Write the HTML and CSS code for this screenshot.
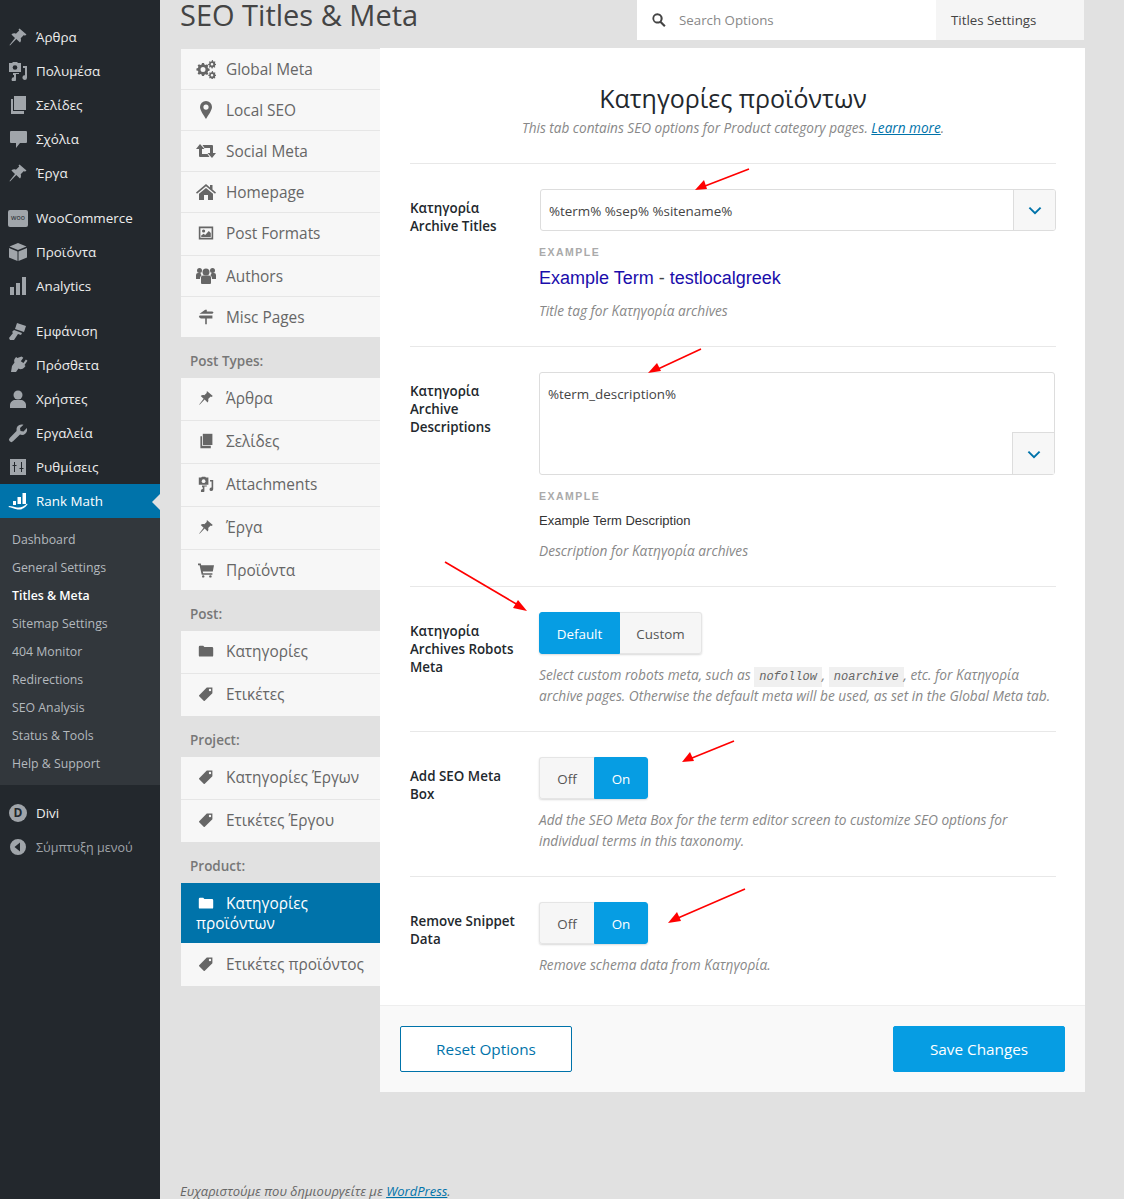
FILE: index.html
```html
<!DOCTYPE html>
<html lang="el">
<head>
    <meta charset="UTF-8">
    <meta name="viewport" content="width=device-width, initial-scale=1.0">
    <title>SEO Titles &amp; Meta</title>
    <link rel="stylesheet" href="styles.css">
</head>
<body>
    <svg class="sprite" width="0" height="0" aria-hidden="true">
        <symbol id="i-pin" viewBox="0 0 20 20"><path d="M11.500 1.500l7 6-1.600 1.200-1-.6-3.200 3.200c.6 1.600.3 3.200-.7 4.300L8.300 12 2 18.500l-.5-.5L7 11 3.400 7.400c1.200-1.100 3-1.400 4.500-.7l3.300-3.200-.7-.9z"/></symbol>
        <symbol id="i-media" viewBox="0 0 20 20"><path d="M1 2h3l1-1h4l1 1h3v9H1z"/><circle cx="7" cy="6.500" r="2.300" fill="var(--hole)"/><path d="M15 5h4v11.500a2.300 2.300 0 1 1-2-2.200V7h-2zM5 12h6v1H8v5.500a2.200 2.200 0 1 1-2-2.200V14H5z"/></symbol>
        <symbol id="i-pages" viewBox="0 0 20 20"><path d="M6 1h12v14H6z"/><path d="M3 4h2v12h11v3H3z"/></symbol>
        <symbol id="i-comment" viewBox="0 0 20 20"><path d="M3 2h15a1 1 0 0 1 1 1v10a1 1 0 0 1-1 1h-6l-4 5v-5H3a1 1 0 0 1-1-1V3a1 1 0 0 1 1-1z"/></symbol>
        <symbol id="i-box" viewBox="0 0 20 20"><path d="M10 1l8.500 3.500L10 8 1.500 4.500z"/><path d="M1 6l8.500 3.500V19L1 15.500zM19 6v9.500L10.500 19V9.500z"/></symbol>
        <symbol id="i-bars" viewBox="0 0 20 20"><path d="M2 11h4v8H2zM8 7h4v12H8zM14 1h4v18h-4z"/></symbol>
        <symbol id="i-brush" viewBox="0 0 20 20"><path d="M9 2l9 3-2 6-9-3z"/><path d="M6 9l8 3-1 2-3-1-4 6H2l-1-2 4-5-1-1z"/></symbol>
        <symbol id="i-plugin" viewBox="0 0 20 20"><path d="M13.500 1.500l1.800 1.200-2.500 3.500 2.600 1.900 2.500-3.500 1.600 1.200-3 4.300 1 .8-1 1.300c-1.500 2-4 2.400-6 1.400L8 17H3l1-6 2.500-3.500c-.6-1.500-.4-3 .6-4.300l1-1.200 1.300.9z"/></symbol>
        <symbol id="i-user" viewBox="0 0 20 20"><circle cx="10" cy="6" r="4.500"/><path d="M2 19v-3c0-3 3-5 5-5h6c2 0 5 2 5 5v3z"/></symbol>
        <symbol id="i-wrench" viewBox="0 0 20 20"><path d="M14 1.500a5 5 0 0 1 1.500.2L12 5l.5 3 3 .5 3.300-3.500A5.200 5.200 0 0 1 12 11.500L5 18.300a1.800 1.800 0 0 1-3.300-3.300L8.500 8A5.200 5.200 0 0 1 14 1.500z"/></symbol>
        <symbol id="i-sliders" viewBox="0 0 20 20"><path fill-rule="evenodd" d="M2 2h16v16H2zM6 5v3H4.500v1H6v6h1V9h1.500V8H7V5zM13 5v6h-1.500v1H13v3h1v-3h1.500v-1H14V5z"/></symbol>
        <symbol id="i-rank" viewBox="0 0 20 20"><path d="M5 10h3v4H5zM9.500 6H13v7H9.500zM14.500 2H18v11h-3.500z"/><path d="M1 15c3 0 5 1 8 1.500 4 .5 7-1 10-4l.5 1c-3 4-6 5.500-10 5-3-.5-6-2-9-2.500z"/></symbol>
        <symbol id="i-back" viewBox="0 0 20 20"><path fill-rule="evenodd" d="M10 2a8 8 0 1 1 0 16 8 8 0 0 1 0-16zM12 5.500L6.500 10l5.500 4.500z"/></symbol>
        <symbol id="i-gears" viewBox="0 0 20 20"><path fill-rule="evenodd" d="M6 4l2 .1.400 1.500 1.300.5 1.300-.8 1.400 1.400-.8 1.300.5 1.300 1.500.4v2l-1.500.4-.5 1.300.8 1.300-1.400 1.400-1.300-.8-1.300.5L8 17H6l-.4-1.500-1.300-.5-1.300.8-1.400-1.400.8-1.300-.5-1.300L.4 11.400v-2l1.500-.4.5-1.300-.8-1.300L3 5.200l1.300.8 1.300-.5zM7 8a2.500 2.500 0 1 0 0 5 2.500 2.500 0 0 0 0-5z"/><path fill-rule="evenodd" d="M16 1l1 .3.100 1 1 .5.800-.6.600.8-.600.8.3 1 1 .2v1l-1 .2-.4 1 .6.800-.8.700-.8-.6-1 .4-.2 1h-1l-.2-1-1-.4-.7.600-.8-.8.600-.8-.4-1-1-.1v-1l1-.2.4-1-.6-.7.800-.8.800.5 1-.4zM16 4a1.300 1.300 0 1 0 0 2.600A1.300 1.300 0 0 0 16 4zM16 12l1 .3.100 1 1 .4.800-.5.600.8-.6.800.4 1 1 .1v1l-1 .2-.4 1 .5.800-.8.600-.7-.5-1 .4-.2 1h-1l-.2-1-1-.4-.7.500-.7-.7.500-.8-.4-1-1-.2v-1l1-.1.4-1-.5-.8.700-.7.800.5 1-.4zM16 15a1.300 1.300 0 1 0 0 2.600A1.300 1.300 0 0 0 16 15z"/></symbol>
        <symbol id="i-marker" viewBox="0 0 20 20"><path fill-rule="evenodd" d="M10 1a6 6 0 0 1 6 6c0 3-3.500 8-6 12-2.500-4-6-9-6-12a6 6 0 0 1 6-6zM10 4.500a2.600 2.600 0 1 0 0 5.200 2.600 2.600 0 0 0 0-5.200z"/></symbol>
        <symbol id="i-retweet" viewBox="0 0 20 20"><path d="M4 3l4.500 5H6v5h5.500l2 3H4a1 1 0 0 1-1-1V8H0z"/><path d="M16 17l-4.500-5H14V7H8.500l-2-3H16a1 1 0 0 1 1 1v7h3z"/></symbol>
        <symbol id="i-home" viewBox="0 0 20 20"><path d="M10 2l4 3.400V3h2.500v4.500L20 10.500l-1 1.200L10 4.300 1 11.700l-1-1.200z"/><path d="M10 6l7 5.800V18h-5v-5H8v5H3v-6.200z"/></symbol>
        <symbol id="i-picture" viewBox="0 0 20 20"><path fill-rule="evenodd" d="M1 2h18v16H1zM3 4v12h14V4z"/><circle cx="7" cy="7.500" r="2"/><path d="M4 15v-2l3-2 2 1.500 4.500-5L16 10v5z"/></symbol>
        <symbol id="i-users" viewBox="0 0 20 20"><circle cx="10" cy="6" r="3.500"/><circle cx="3.500" cy="4.500" r="2.500"/><circle cx="16.500" cy="4.500" r="2.500"/><path d="M5 11a2 2 0 0 1 2-1.500h6a2 2 0 0 1 2 1.500v6a1 1 0 0 1-1 1H6a1 1 0 0 1-1-1z"/><path d="M0 9a2 2 0 0 1 2-2h2.500c.2 1 .5 1.600 1.200 2.200C4.500 10 4 11 4 13H0zM20 9a2 2 0 0 0-2-2h-2.500c-.2 1-.5 1.600-1.200 2.200 1.200.8 1.700 1.800 1.700 3.800h4z"/></symbol>
        <symbol id="i-sign" viewBox="0 0 20 20"><path d="M9 1h2v2h7l1.500 1.500L18 6H2zM2 8h16v4H11v7H9v-7H3.500L1 10z"/></symbol>
        <symbol id="i-cart" viewBox="0 0 20 20"><path d="M0 2h3.500L4 4h16l-1.500 8H6l.4 2H18v2H4.600L2 4H0z"/><circle cx="6.500" cy="18" r="1.500"/><circle cx="15.500" cy="18" r="1.500"/></symbol>
        <symbol id="i-folder" viewBox="0 0 20 20"><path d="M1 5a1.500 1.500 0 0 1 1.500-1.500h4L8 5h9.500A1.500 1.500 0 0 1 19 6.500v9a1.500 1.500 0 0 1-1.500 1.500h-15A1.500 1.500 0 0 1 1 15.500z"/></symbol>
        <symbol id="i-tag" viewBox="0 0 20 20"><path fill-rule="evenodd" d="M11 2h7v7l-9.500 9.500a1 1 0 0 1-1.400 0l-5.600-5.600a1 1 0 0 1 0-1.400zM15 3.500a1.500 1.500 0 1 0 0 3 1.500 1.500 0 0 0 0-3z"/></symbol>
        <symbol id="i-search" viewBox="0 0 20 20"><path fill-rule="evenodd" d="M8 1.500a6.500 6.500 0 0 1 5.300 10.300l5 5-1.900 1.900-5-5A6.500 6.500 0 1 1 8 1.500zM8 4a4 4 0 1 0 0 8 4 4 0 0 0 0-8z"/></symbol>
        <symbol id="i-chevron" viewBox="0 0 20 20"><path d="M3 7l7 7 7-7" fill="none" stroke="currentColor" stroke-width="2.400"/></symbol>
    </svg>

    <div class="wrap">
        <nav class="adminmenu">
            <ul class="menu-group">
                <li class="menu-item"><svg class="menu-icon"><use href="#i-pin"/></svg>Άρθρα</li>
                <li class="menu-item"><svg class="menu-icon"><use href="#i-media"/></svg>Πολυμέσα</li>
                <li class="menu-item"><svg class="menu-icon"><use href="#i-pages"/></svg>Σελίδες</li>
                <li class="menu-item"><svg class="menu-icon"><use href="#i-comment"/></svg>Σχόλια</li>
                <li class="menu-item"><svg class="menu-icon"><use href="#i-pin"/></svg>Έργα</li>
            </ul>
            <ul class="menu-group">
                <li class="menu-item"><span class="woo-icon">woo</span>WooCommerce</li>
                <li class="menu-item"><svg class="menu-icon"><use href="#i-box"/></svg>Προϊόντα</li>
                <li class="menu-item"><svg class="menu-icon"><use href="#i-bars"/></svg>Analytics</li>
            </ul>
            <ul class="menu-group">
                <li class="menu-item"><svg class="menu-icon"><use href="#i-brush"/></svg>Εμφάνιση</li>
                <li class="menu-item"><svg class="menu-icon"><use href="#i-plugin"/></svg>Πρόσθετα</li>
                <li class="menu-item"><svg class="menu-icon"><use href="#i-user"/></svg>Χρήστες</li>
                <li class="menu-item"><svg class="menu-icon"><use href="#i-wrench"/></svg>Εργαλεία</li>
                <li class="menu-item"><svg class="menu-icon"><use href="#i-sliders"/></svg>Ρυθμίσεις</li>
                <li class="menu-item current"><svg class="menu-icon"><use href="#i-rank"/></svg>Rank Math</li>
            </ul>
            <ul class="submenu">
                <li>Dashboard</li>
                <li>General Settings</li>
                <li class="sub-current">Titles &amp; Meta</li>
                <li>Sitemap Settings</li>
                <li>404 Monitor</li>
                <li>Redirections</li>
                <li>SEO Analysis</li>
                <li>Status &amp; Tools</li>
                <li>Help &amp; Support</li>
            </ul>
            <ul class="menu-group">
                <li class="menu-item"><span class="divi-icon">D</span>Divi</li>
                <li class="menu-item collapse"><svg class="menu-icon"><use href="#i-back"/></svg>Σύμπτυξη μενού</li>
            </ul>
        </nav>

        <div class="content">
            <header class="topbar">
                <h1 class="page-title">SEO Titles &amp; Meta</h1>
                <div class="search-box">
                    <div class="search-input"><svg class="search-icon"><use href="#i-search"/></svg>Search Options</div>
                    <div class="search-scope">Titles Settings</div>
                </div>
            </header>

            <div class="columns">
                <aside class="tabs">
                    <a class="tab"><svg class="tab-icon"><use href="#i-gears"/></svg>Global Meta</a>
                    <a class="tab"><svg class="tab-icon"><use href="#i-marker"/></svg>Local SEO</a>
                    <a class="tab"><svg class="tab-icon"><use href="#i-retweet"/></svg>Social Meta</a>
                    <a class="tab"><svg class="tab-icon"><use href="#i-home"/></svg>Homepage</a>
                    <a class="tab tall"><svg class="tab-icon small"><use href="#i-picture"/></svg>Post Formats</a>
                    <a class="tab"><svg class="tab-icon"><use href="#i-users"/></svg>Authors</a>
                    <a class="tab last"><svg class="tab-icon small"><use href="#i-sign"/></svg>Misc Pages</a>

                    <p class="tab-label">Post Types:</p>
                    <a class="tab tall"><svg class="tab-icon small"><use href="#i-pin"/></svg>Άρθρα</a>
                    <a class="tab tall"><svg class="tab-icon small"><use href="#i-pages"/></svg>Σελίδες</a>
                    <a class="tab tall"><svg class="tab-icon small"><use href="#i-media"/></svg>Attachments</a>
                    <a class="tab tall"><svg class="tab-icon small"><use href="#i-pin"/></svg>Έργα</a>
                    <a class="tab last"><svg class="tab-icon small"><use href="#i-cart"/></svg>Προϊόντα</a>

                    <p class="tab-label">Post:</p>
                    <a class="tab tall"><svg class="tab-icon small"><use href="#i-folder"/></svg>Κατηγορίες</a>
                    <a class="tab tall last"><svg class="tab-icon small"><use href="#i-tag"/></svg>Ετικέτες</a>

                    <p class="tab-label">Project:</p>
                    <a class="tab tall"><svg class="tab-icon small"><use href="#i-tag"/></svg>Κατηγορίες Έργων</a>
                    <a class="tab tall last"><svg class="tab-icon small"><use href="#i-tag"/></svg>Ετικέτες Έργου</a>

                    <p class="tab-label">Product:</p>
                    <a class="tab active"><svg class="tab-icon small"><use href="#i-folder"/></svg>Κατηγορίες προϊόντων</a>
                    <a class="tab tall end"><svg class="tab-icon small"><use href="#i-tag"/></svg>Ετικέτες προϊόντος</a>
                </aside>

                <main class="panel">
                    <div class="panel-body">
                        <div class="panel-head">
                            <h2>Κατηγορίες προϊόντων</h2>
                            <p>This tab contains SEO options for Product category pages. <a href="#">Learn more</a>.</p>
                        </div>

                        <section class="row row-titles">
                            <label class="row-label">Κατηγορία Archive Titles</label>
                            <div class="row-field">
                                <div class="text-input">
                                    <span class="input-value">%term% %sep% %sitename%</span>
                                    <span class="input-btn"><svg class="chevron"><use href="#i-chevron"/></svg></span>
                                </div>
                                <div class="example-label">EXAMPLE</div>
                                <div class="example-title"><span>Example Term</span> <b>-</b> testlocalgreek</div>
                                <p class="desc">Title tag for Κατηγορία archives</p>
                            </div>
                        </section>

                        <section class="row row-descriptions">
                            <label class="row-label">Κατηγορία Archive Descriptions</label>
                            <div class="row-field">
                                <div class="text-area">
                                    <span class="input-value">%term_description%</span>
                                    <span class="area-btn"><svg class="chevron"><use href="#i-chevron"/></svg></span>
                                </div>
                                <div class="example-label">EXAMPLE</div>
                                <div class="example-text">Example Term Description</div>
                                <p class="desc">Description for Κατηγορία archives</p>
                            </div>
                        </section>

                        <section class="row row-robots">
                            <label class="row-label">Κατηγορία Archives Robots Meta</label>
                            <div class="row-field">
                                <div class="btn-group">
                                    <span class="seg seg-on seg-default">Default</span><span class="seg seg-custom">Custom</span>
                                </div>
                                <p class="desc">Select custom robots meta, such as <code>nofollow</code>, <code>noarchive</code>, etc. for Κατηγορία archive pages. Otherwise the default meta will be used, as set in the Global Meta tab.</p>
                            </div>
                        </section>

                        <section class="row row-toggle">
                            <label class="row-label">Add SEO Meta Box</label>
                            <div class="row-field">
                                <div class="btn-group">
                                    <span class="seg seg-off">Off</span><span class="seg seg-on seg-right">On</span>
                                </div>
                                <p class="desc">Add the SEO Meta Box for the term editor screen to customize SEO options for individual terms in this taxonomy.</p>
                            </div>
                        </section>

                        <section class="row row-toggle row-last">
                            <label class="row-label">Remove Snippet Data</label>
                            <div class="row-field">
                                <div class="btn-group">
                                    <span class="seg seg-off">Off</span><span class="seg seg-on seg-right">On</span>
                                </div>
                                <p class="desc">Remove schema data from Κατηγορία.</p>
                            </div>
                        </section>
                    </div>

                    <footer class="panel-footer">
                        <button class="btn-reset" type="button">Reset Options</button>
                        <button class="btn-save" type="button">Save Changes</button>
                    </footer>
                </main>
            </div>

            <p class="wp-footer">Ευχαριστούμε που δημιουργείτε με <a href="#">WordPress</a>.</p>
        </div>
    </div>

    <!-- red annotation arrows drawn over the screenshot -->
    <svg class="arrows" width="1124" height="1199" viewBox="0 0 1124 1199" aria-hidden="true">
        <g stroke="#f00" stroke-width="1.600"><line x1="749" y1="169" x2="705" y2="186"/><line x1="701" y1="349" x2="658" y2="369"/><line x1="445" y1="562" x2="518" y2="605"/><line x1="734" y1="741" x2="692" y2="758"/><line x1="745" y1="889" x2="678" y2="918"/></g>
        <g fill="#f00"><path d="M695 190l9-10 3 9z"/><path d="M648 373l9-10 4 8z"/><path d="M527 611l-14-3 5-8z"/><path d="M682 762l8-10 4 9z"/><path d="M668 923l9-11 4 9z"/></g>
    </svg>
</body>
</html>
```

FILE: styles.css
```css
* {
    box-sizing: border-box;
}

html, body {
    margin: 0;
    padding: 0;
    height: 1199px;
    overflow: hidden;
}

body {
    position: relative;
    background: #e1e1e1;
    font-family: "Open Sans", "Noto Sans", sans-serif;
    color: #444;
}

ul, p, h1, h2 {
    margin: 0;
    padding: 0;
}

ul {
    list-style: none;
}

.sprite {
    position: absolute;
}

.wrap {
    display: flex;
    height: 1199px;
}

/* wp admin menu */
.adminmenu {
    width: 160px;
    flex: none;
    background: #23282d;
    padding-top: 20px;
    --hole: #23282d;
}

.menu-group {
    margin-bottom: 11px;
}

.menu-item {
    position: relative;
    display: flex;
    align-items: center;
    height: 34px;
    padding-left: 8px;
    font-size: 13.4px;
    color: #eee;
}

.menu-icon {
    width: 20px;
    height: 20px;
    margin-right: 8px;
    flex: none;
    fill: #a0a5aa;
}

.woo-icon {
    width: 20px;
    height: 17px;
    margin-right: 8px;
    flex: none;
    border-radius: 2px;
    background: #a0a5aa;
    color: #23282d;
    font-size: 7px;
    line-height: 16px;
    text-align: center;
}

.divi-icon {
    width: 18px;
    height: 18px;
    margin: 0 9px 0 1px;
    flex: none;
    border-radius: 50%;
    background: #a0a5aa;
    color: #23282d;
    font-size: 12px;
    font-weight: 700;
    line-height: 18px;
    text-align: center;
}

.collapse {
    font-size: 12.5px;
    color: #a0a5aa;
}

.current {
    background: #0073aa;
    color: #fff;
}

.current .menu-icon {
    fill: #fff;
}

.current::after {
    content: "";
    position: absolute;
    right: 0;
    top: 10px;
    border: 8px solid transparent;
    border-right-color: #e1e1e1;
    border-left-width: 0;
}

.submenu {
    background: #32373c;
    padding: 8px 0 7px;
    margin-top: -11px;
    margin-bottom: 11px;
}

.submenu li {
    height: 28px;
    line-height: 28px;
    padding-left: 12px;
    font-size: 12.3px;
    color: #b4b9be;
}

.submenu .sub-current {
    color: #fff;
    font-weight: 600;
}

/* content */
.content {
    flex: 1;
    padding-left: 20px;
    min-width: 0;
}

.topbar {
    display: flex;
    justify-content: space-between;
    height: 48px;
    padding-right: 40px;
}

.page-title {
    font-size: 29px;
    font-weight: 400;
    line-height: 30px;
    color: #444;
}

.search-box {
    display: flex;
    width: 447px;
    height: 40px;
    background: #fff;
    font-size: 13.3px;
}

.search-input {
    display: flex;
    align-items: center;
    width: 299px;
    padding-left: 14px;
    color: #888;
}

.search-icon {
    width: 16px;
    height: 16px;
    margin-right: 12px;
    fill: #444;
}

.search-scope {
    flex: 1;
    padding-left: 15px;
    line-height: 40px;
    background: #f5f5f5;
    color: #444;
}

.columns {
    display: flex;
    align-items: flex-start;
    padding-right: 39px;
}

/* tabs */
.tabs {
    width: 200px;
    flex: none;
    margin-top: 1px;
    padding-left: 1px;
}

.tab {
    display: block;
    height: 41px;
    padding-left: 15px;
    line-height: 42px;
    font-size: 15.4px;
    color: #666;
    background: #f7f7f7;
    border-bottom: 1px solid #e6e6e6;
}

.tab.tall {
    height: 43px;
    line-height: 41px;
}

.tab.last {
    height: 40px;
    border-bottom: 0;
}

.tab.tall.last {
    height: 42px;
}

.tab.end {
    line-height: 43px;
    border-bottom: 0;
}

.tab-icon {
    width: 20px;
    height: 20px;
    margin-right: 10px;
    vertical-align: -4px;
    fill: #666;
    --hole: #f7f7f7;
}

.tab-icon.small {
    width: 16px;
    height: 16px;
    margin: 0 12px 0 2px;
    vertical-align: -2px;
}

.tab.active {
    height: 60px;
    padding-top: 11px;
    line-height: 20px;
    background: #0073aa;
    color: #fff;
    border-bottom: 0;
}

.active .tab-icon {
    fill: #fff;
}

.tab-label {
    height: 41px;
    padding-left: 9px;
    line-height: 49px;
    font-size: 13.5px;
    font-weight: 600;
    color: #777;
}

/* panel */
.panel {
    flex: 1;
    height: 1044px;
    background: #fff;
    display: flex;
    flex-direction: column;
}

.panel-body {
    flex: 1;
    padding: 0 29px 0 30px;
}

.panel-head {
    height: 115px;
    padding-top: 33px;
    text-align: center;
}

.panel-head h2 {
    font-size: 25px;
    font-weight: 500;
    line-height: 34px;
    color: #23282d;
}

.panel-head p {
    margin-top: 3px;
    font-size: 13.6px;
    font-style: italic;
    line-height: 20px;
    color: #888;
}

.panel-head a {
    color: #0073aa;
}

.row {
    display: flex;
    height: 145px;
    padding-top: 25px;
    border-top: 1px solid #e8e8e8;
}

.row-titles {
    height: 183px;
}

.row-descriptions {
    height: 240px;
}

.row-last {
    height: 129px;
}

.row-label {
    width: 129px;
    flex: none;
    padding-top: 10px;
    padding-right: 15px;
    font-size: 13.4px;
    font-weight: 600;
    line-height: 18px;
    color: #23282d;
}

.row-field {
    flex: 1;
    min-width: 0;
}

.text-input {
    display: flex;
    height: 42px;
    margin-left: 1px;
    border: 1px solid #ddd;
    border-radius: 3px;
    overflow: hidden;
}

.input-value {
    flex: 1;
    padding: 0 8px;
    line-height: 43px;
    font-size: 13.4px;
    color: #444;
}

.input-btn {
    display: flex;
    align-items: center;
    justify-content: center;
    width: 42px;
    background: #f7f7f7;
    border-left: 1px solid #ddd;
}

.chevron {
    width: 16px;
    height: 16px;
    color: #0073aa;
}

.text-area {
    position: relative;
    height: 103px;
    margin-right: 1px;
    border: 1px solid #ddd;
    border-radius: 3px;
}

.text-area .input-value {
    display: block;
    line-height: 43px;
}

.area-btn {
    position: absolute;
    right: 0;
    bottom: 0;
    display: flex;
    align-items: center;
    justify-content: center;
    width: 42px;
    height: 42px;
    background: #f7f7f7;
    border-left: 1px solid #ddd;
    border-top: 1px solid #ddd;
}

.example-label {
    margin-top: 15px;
    font-family: "Liberation Sans", Arial, sans-serif;
    font-size: 10.5px;
    font-weight: 700;
    letter-spacing: 1.5px;
    line-height: 12px;
    color: #aaa;
}

.example-title {
    height: 24px;
    margin-top: 8px;
    font-family: "Liberation Sans", Arial, sans-serif;
    font-size: 18px;
    line-height: 25px;
    color: #1a0dab;
}

.example-title b {
    font-weight: 400;
    color: #444;
}

.example-text {
    margin-top: 10px;
    font-family: "Liberation Sans", Arial, sans-serif;
    font-size: 13px;
    line-height: 18px;
    color: #333;
}

.desc {
    margin-top: 10px;
    font-size: 13.7px;
    font-style: italic;
    line-height: 21px;
    color: #888;
}

.btn-group {
    display: inline-flex;
    height: 42px;
    border-radius: 3px;
    box-shadow: 0 1px 2px rgba(0, 0, 0, 0.15);
    vertical-align: top;
}

.seg {
    display: block;
    height: 42px;
    line-height: 43px;
    text-align: center;
    font-size: 13.4px;
    color: #555;
    background: #f6f6f6;
    border: 1px solid #e5e5e5;
}

.seg-on {
    background: #069de3;
    border-color: #069de3;
    color: #fff;
}

.seg-default {
    width: 81px;
    border-radius: 3px 0 0 3px;
}

.seg-custom {
    width: 82px;
    border-left: 0;
    border-radius: 0 3px 3px 0;
}

.seg-off {
    width: 55px;
    border-right: 0;
    border-radius: 3px 0 0 3px;
}

.seg-right {
    width: 54px;
    border-radius: 0 3px 3px 0;
}

code {
    padding: 3px 5px;
    background: #f0f0f0;
    font-family: "Liberation Mono", monospace;
    font-size: 12px;
    line-height: 12px;
    color: #666;
}

.panel-footer {
    display: flex;
    justify-content: space-between;
    height: 87px;
    padding: 20px 20px 0;
    background: #f9f9f9;
    border-top: 1px solid #eee;
}

.panel-footer button {
    width: 172px;
    height: 46px;
    border-radius: 2px;
    font-family: "Open Sans", sans-serif;
    font-size: 15.3px;
}

.btn-reset {
    background: #fff;
    border: 1px solid #0073aa;
    color: #0073aa;
}

.btn-save {
    background: #069de3;
    border: 1px solid #069de3;
    color: #fff;
}

.wp-footer {
    margin-top: 90px;
    font-size: 13px;
    font-style: italic;
    line-height: 18px;
    color: #666;
}

.wp-footer a {
    color: #0073aa;
}

.arrows {
    position: absolute;
    left: 0;
    top: 0;
    pointer-events: none;
}
```
